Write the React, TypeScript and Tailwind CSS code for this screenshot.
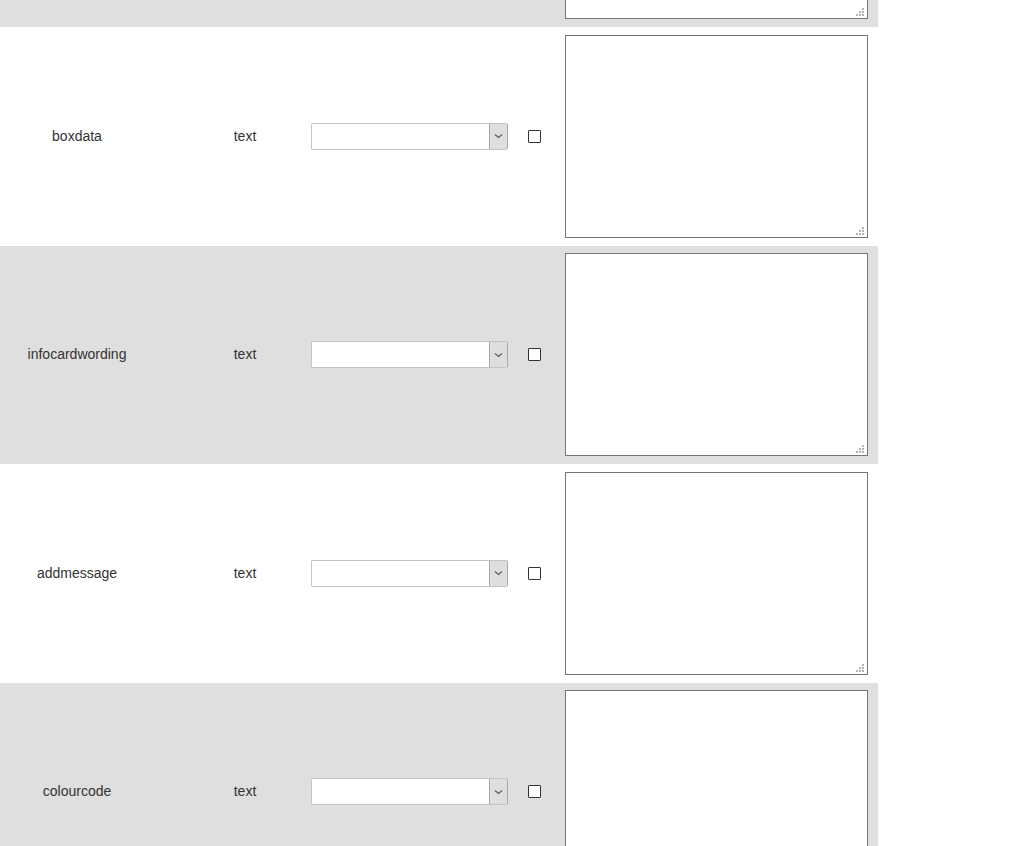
import React from "react";

const rows = [
  { name: "" },
  { name: "boxdata" },
  { name: "infocardwording" },
  { name: "addmessage" },
  { name: "colourcode" },
];

function Grip() {
  return (
    <svg className="absolute right-[3px] bottom-[2px]" width="8" height="8" viewBox="0 0 8 8">
      <g fill="#b4b4b4">
        <rect x="6" y="0" width="2" height="2" />
        <rect x="3" y="3" width="2" height="2" />
        <rect x="6" y="3" width="2" height="2" />
        <rect x="0" y="6" width="2" height="2" />
        <rect x="3" y="6" width="2" height="2" />
        <rect x="6" y="6" width="2" height="2" />
      </g>
    </svg>
  );
}

function Select() {
  return (
    <div className="ml-[1px] flex h-[27px] w-[197px] rounded-[2px] border border-[#c4c4c4] border-r-[#a8a8a8] bg-white">
      <div className="flex-1" />
      <div className="flex w-[18px] items-center justify-center rounded-r-[1px] border-l border-[#a8a8a8] bg-[#dedede]">
        <svg width="9" height="6" viewBox="0 0 9 6">
          <path d="M1 1.5 L4.5 4.5 L8 1.5" fill="none" stroke="#5a5a5a" strokeWidth="1.1" />
        </svg>
      </div>
    </div>
  );
}

function Row({ name, gray }: { name: string; gray: boolean }) {
  return (
    <div className={`flex h-[218.5px] w-[878px] items-center ${gray ? "bg-[#dfdfdf]" : "bg-white"}`}>
      <div className="w-[154px] text-center">{name}</div>
      <div className="ml-[26px] w-[130px] text-center">{name ? "text" : ""}</div>
      <Select />
      <div className="ml-[20px] h-[13px] w-[13px] rounded-[1px] border border-[#333] bg-white" />
      <div className="relative ml-[24px] h-[203px] w-[303px] border border-[#767676] bg-white">
        <Grip />
      </div>
    </div>
  );
}

export default function App() {
  return (
    <div className="h-[846px] w-[1009px] overflow-hidden bg-white">
      <div
        className="-mt-[191.5px] text-[14px] text-[#333]"
        style={{ fontFamily: '"Liberation Sans", Arial, sans-serif' }}
      >
        {rows.map((r, i) => (
          <Row key={i} name={r.name} gray={i % 2 === 0} />
        ))}
      </div>
    </div>
  );
}
